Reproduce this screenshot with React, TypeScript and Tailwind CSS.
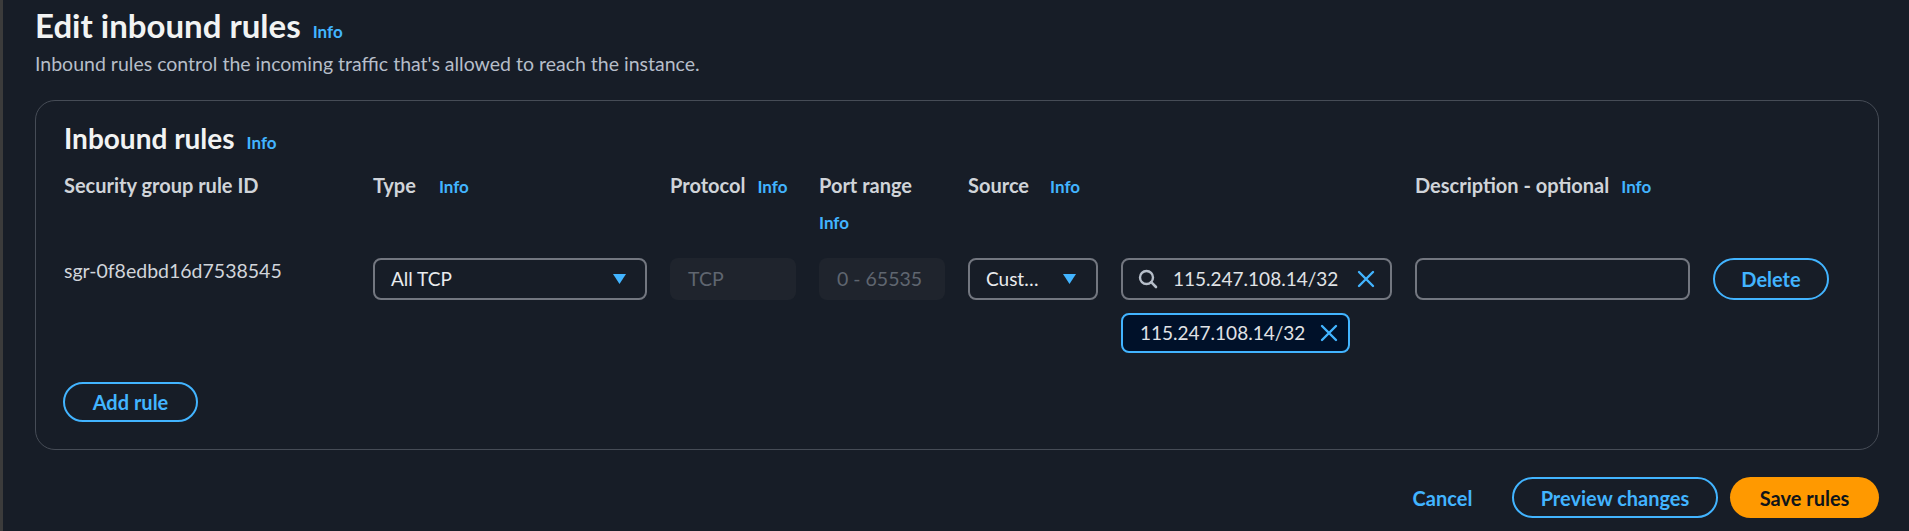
import React from "react";

function Info({ className = "" }: { className?: string }) {
	return <span className={`text-[17px] font-bold leading-5 text-[#42b4ff] ${className}`}>Info</span>;
}

function Caret() {
	return (
		<svg width="13" height="10" viewBox="0 0 13 10" className="shrink-0">
			<polygon points="0,0 13,0 6.5,10" fill="#42b4ff" />
		</svg>
	);
}

function CloseIcon({ size = 18 }: { size?: number }) {
	return (
		<svg width={size} height={size} viewBox="0 0 18 18" className="shrink-0">
			<path d="M2 2 L16 16 M16 2 L2 16" stroke="#42b4ff" strokeWidth="2.4" strokeLinecap="round" fill="none" />
		</svg>
	);
}

function SearchIcon() {
	return (
		<svg width="20" height="20" viewBox="0 0 20 20" className="shrink-0">
			<circle cx="8.5" cy="8.5" r="6.5" stroke="#b6bec9" strokeWidth="2.4" fill="none" />
			<path d="M13.2 13.2 L18 18" stroke="#b6bec9" strokeWidth="2.6" strokeLinecap="round" />
		</svg>
	);
}

function Label({ children }: { children: React.ReactNode }) {
	return <span className="text-[20px] font-bold leading-6 text-[#d0d4d9]">{children}</span>;
}

export default function App() {
	return (
		<div className="flex min-h-screen bg-[#171d27] font-['Lato','Noto_Sans',sans-serif]">
			<div className="w-[3px] shrink-0 bg-[#3b3b3b]" />
			<div className="flex-1 pl-[32px] pr-[30px] pt-[7px]">
				{/* page header */}
				<div className="flex items-baseline gap-[12px]">
					<h1 className="text-[33px] font-bold leading-[36px] text-[#f2f3f3]">Edit inbound rules</h1>
					<Info />
				</div>
				<p className="mt-[9px] text-[19.5px] leading-6 text-[#b6bec9]">
					Inbound rules control the incoming traffic that's allowed to reach the instance.
				</p>

				{/* rules container */}
				<div className="mt-[24px] rounded-[20px] border border-[#464c56] pl-[28px] pr-[28px] pt-[20px] pb-[27px]">
					<div className="flex items-baseline gap-[12px]">
						<h2 className="text-[28px] font-bold leading-[34px] text-[#f2f3f3]">Inbound rules</h2>
						<Info />
					</div>

					<div className="mt-[18px] grid grid-cols-[286px_274px_126px_126px_130px_271px_275px_116px] gap-x-[23px] gap-y-[25px] items-start">
						{/* header row */}
						<div><Label>Security group rule ID</Label></div>
						<div className="flex items-baseline gap-[23px]"><Label>Type</Label><Info /></div>
						<div className="flex items-baseline gap-[12px]"><Label>Protocol</Label><Info /></div>
						<div className="flex flex-col items-start">
							<Label>Port range</Label>
							<Info className="mt-[16px]" />
						</div>
						<div className="flex items-baseline gap-[21px]"><Label>Source</Label><Info /></div>
						<div />
						<div className="flex items-baseline gap-[12px]"><Label>Description - optional</Label><Info /></div>
						<div />

						{/* rule row */}
						<div className="pt-[1px] text-[19.5px] leading-6 text-[#d1d5db]">sgr-0f8edbd16d7538545</div>
						<div className="flex h-[42px] items-center justify-between rounded-[8px] border-2 border-[#737780] pl-[16px] pr-[19px]">
							<span className="text-[19px] text-[#e9ebed]">All TCP</span>
							<Caret />
						</div>
						<div className="flex h-[42px] items-center rounded-[8px] bg-[#1f242d] pl-[18px] text-[19.5px] text-[#5f6670]">TCP</div>
						<div className="flex h-[42px] items-center rounded-[8px] bg-[#1f242d] pl-[18px] text-[19.5px] text-[#5f6670]">0 - 65535</div>
						<div className="flex h-[42px] items-center justify-between rounded-[8px] border-2 border-[#737780] pl-[16px] pr-[20px]">
							<span className="text-[19px] text-[#e9ebed]">Cust…</span>
							<Caret />
						</div>
						<div className="flex flex-col items-start">
							<div className="flex h-[42px] w-full items-center rounded-[8px] border-2 border-[#737780] pl-[15px] pr-[15px]">
								<SearchIcon />
								<span className="ml-[15px] flex-1 text-[19px] text-[#e0e3e6]">115.247.108.14/32</span>
								<CloseIcon />
							</div>
							<div className="mt-[13px] flex h-[40px] w-[229px] items-center justify-between rounded-[8px] border-2 border-[#42b4ff] bg-[#001129] pl-[17px] pr-[10px]">
								<span className="text-[19px] text-[#e0e3e6]">115.247.108.14/32</span>
								<CloseIcon />
							</div>
						</div>
						<div className="h-[42px] rounded-[8px] border-2 border-[#737780]" />
						<button className="h-[42px] rounded-full border-2 border-[#42b4ff] text-[20px] font-bold text-[#42b4ff]">Delete</button>
					</div>

					<button className="-ml-px mt-[29px] h-[40px] w-[135px] rounded-full border-2 border-[#42b4ff] text-[20px] font-bold text-[#42b4ff]">
						Add rule
					</button>
				</div>

				{/* footer actions */}
				<div className="mt-[27px] flex items-center justify-end">
					<button className="mr-[20px] h-[41px] w-[99px] text-[20px] font-bold text-[#42b4ff]">Cancel</button>
					<button className="mr-[12px] h-[41px] w-[206px] rounded-full border-2 border-[#42b4ff] text-[20px] font-bold text-[#42b4ff]">
						Preview changes
					</button>
					<button className="h-[41px] w-[149px] rounded-full bg-[#ff9900] text-[20px] font-bold text-[#0f141a]">Save rules</button>
				</div>
			</div>
		</div>
	);
}
